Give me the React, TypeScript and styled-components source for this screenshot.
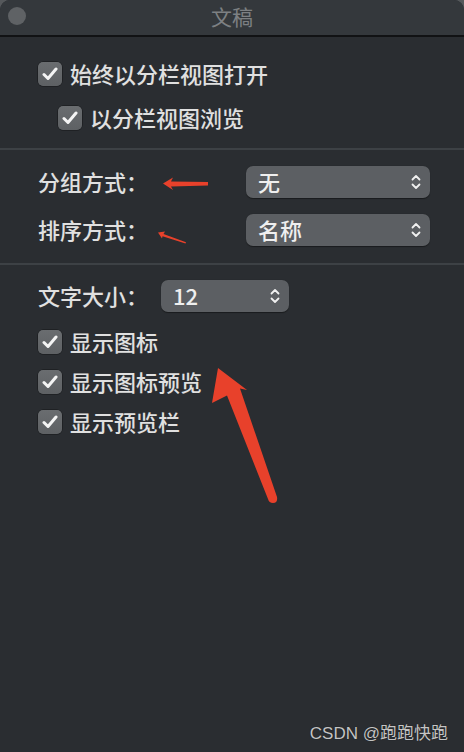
import React from "react";
import styled, { createGlobalStyle } from "styled-components";

const Global = createGlobalStyle`
  html, body { margin: 0; padding: 0; background: #55585b; }
  body { font-family: "Noto Sans CJK SC", "Noto Sans", sans-serif; }
  #root { width: 464px; height: 752px; }
`;

const Window = styled.div`
  position: relative;
  width: 464px;
  height: 752px;
  background: #2a2d31;
  border-radius: 10px 10px 0 0;
  overflow: hidden;
  display: flex;
  flex-direction: column;
`;

const TitleBar = styled.div`
  height: 35px;
  flex: none;
  background: #34383c;
  border-bottom: 2px solid #111214;
  display: flex;
  align-items: center;
  justify-content: center;
  position: relative;
`;

const CloseDot = styled.span`
  position: absolute;
  left: 8px;
  top: 7px;
  width: 18px;
  height: 18px;
  border-radius: 50%;
  background: #5f6265;
`;

const Title = styled.div`
  color: #7d8083;
  font-size: 21px;
  line-height: 1;
  margin-top: -2px;
`;

const Section = styled.div<{ $pt: number; $pb: number; $gap: number }>`
  display: flex;
  flex-direction: column;
  gap: ${(p) => p.$gap}px;
  padding: ${(p) => p.$pt}px 34px ${(p) => p.$pb}px 38px;
`;

const Separator = styled.div`
  height: 2px;
  background: #3d4145;
  flex: none;
`;

const Row = styled.div<{ $indent?: number; $mt?: number }>`
  display: flex;
  align-items: center;
  height: 32px;
  padding-left: ${(p) => p.$indent ?? 0}px;
  margin-top: ${(p) => p.$mt ?? 0}px;
`;

const Box = styled.span`
  width: 24px;
  height: 24px;
  flex: none;
  border-radius: 5px;
  background: linear-gradient(#6a6d70, #5e6164);
  box-shadow: 0 0 0 0.5px rgba(0, 0, 0, 0.5);
  display: flex;
  align-items: center;
  justify-content: center;
`;

const Label = styled.span<{ $w?: number }>`
  color: #e0e0e0;
  font-size: 22px;
  font-weight: 500;
  line-height: 1;
  white-space: nowrap;
  margin-top: -2px;
  ${(p) => (p.$w ? `width: ${p.$w}px; flex: none;` : "")}
`;

const CheckLabel = styled(Label)`
  margin-left: 8px;
`;

const Select = styled.div<{ $w: number }>`
  width: ${(p) => p.$w}px;
  height: 32px;
  box-sizing: border-box;
  border-radius: 7px;
  background: #5c5f63;
  box-shadow: 0 0.5px 1px rgba(0, 0, 0, 0.4);
  display: flex;
  align-items: center;
  justify-content: space-between;
  padding: 0 9px 0 12px;
`;

const SelectText = styled.span`
  color: #efefef;
  font-size: 22px;
  font-weight: 500;
  line-height: 1;
  margin-top: -2px;
`;

const Annotations = styled.svg`
  position: absolute;
  left: 0;
  top: 0;
  pointer-events: none;
`;

const Watermark = styled.div`
  position: absolute;
  right: 16px;
  bottom: 8px;
  color: #c4c4c4;
  font-size: 17px;
  font-family: "Liberation Sans", "Noto Sans CJK SC", sans-serif;
  text-shadow: 0 0 1px rgba(0, 0, 0, 0.6);
`;

const Check = () => (
  <Box>
    <svg width="16" height="14" viewBox="0 0 16 14">
      <path d="M2 7.5 L6 11.5 L14 2" fill="none" stroke="#f4f4f4" strokeWidth="3" strokeLinecap="round" strokeLinejoin="round" />
    </svg>
  </Box>
);

const Chevrons = () => (
  <svg width="10" height="16" viewBox="0 0 10 16">
    <path d="M1.5 5.5 L5 2 L8.5 5.5 M1.5 10.5 L5 14 L8.5 10.5" fill="none" stroke="#f0f0f0" strokeWidth="1.8" strokeLinecap="round" strokeLinejoin="round" />
  </svg>
);

const CheckRow = ({ text, indent, mt }: { text: string; indent?: number; mt?: number }) => (
  <Row $indent={indent} $mt={mt}>
    <Check />
    <CheckLabel>{text}</CheckLabel>
  </Row>
);

const SelectRow = ({ label, value, labelW, selW }: { label: string; value: string; labelW: number; selW: number }) => (
  <Row>
    <Label $w={labelW}>{label}</Label>
    <Select $w={selW}>
      <SelectText>{value}</SelectText>
      <Chevrons />
    </Select>
  </Row>
);

export default function App() {
  return (
    <>
      <Global />
      <Window>
        <TitleBar>
          <CloseDot />
          <Title>文稿</Title>
        </TitleBar>
        <Section $pt={21} $pb={14} $gap={12}>
          <CheckRow text="始终以分栏视图打开" />
          <CheckRow text="以分栏视图浏览" indent={20} />
        </Section>
        <Separator />
        <Section $pt={16} $pb={17} $gap={16}>
          <SelectRow label="分组方式：" value="无" labelW={208} selW={184} />
          <SelectRow label="排序方式：" value="名称" labelW={208} selW={184} />
        </Section>
        <Separator />
        <Section $pt={15} $pb={0} $gap={8}>
          <SelectRow label="文字大小：" value="12" labelW={123} selW={128} />
          <CheckRow text="显示图标" mt={6} />
          <CheckRow text="显示图标预览" />
          <CheckRow text="显示预览栏" />
        </Section>
        <Annotations width="464" height="752" viewBox="0 0 464 752">
          <polygon points="163,183.5 173,177.5 171,181.5 208,182 208,185.5 171,186.5 173,190" fill="#e8412b" />
          <polygon points="158,232.5 165,231.5 163.5,234 186,242.3 185.5,243.5 162.5,236.3 162,238.5" fill="#e8412b" />
          <path d="M218,368 L247,390 L240,388.5 L277,497 Q278,503 273,503 Q269,503 268,499 L227,395.5 L212,403 Z" fill="#e8412b" />
        </Annotations>
        <Watermark>CSDN @跑跑快跑</Watermark>
      </Window>
    </>
  );
}
